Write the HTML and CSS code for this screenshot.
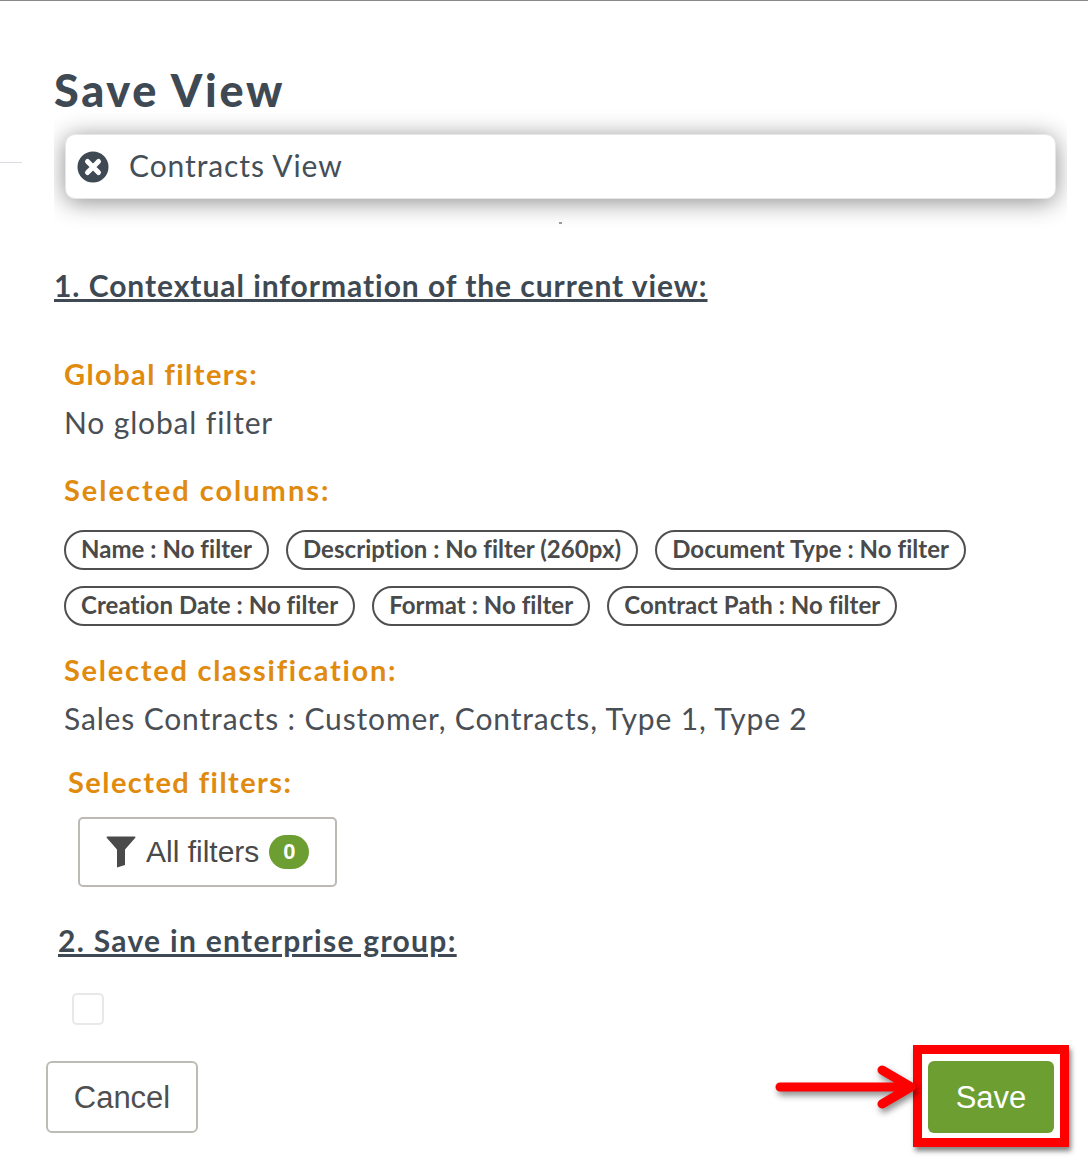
FILE: index.html
```html
<!DOCTYPE html>
<html lang="en">

<head>
    <meta charset="UTF-8">
    <meta name="viewport" content="width=device-width, initial-scale=1.0">
    <title>Save View</title>

    <link rel="stylesheet" href="styles.css">
</head>

<body>

    <div class="side-line"></div>

    <div class="dialog">
        <h1 class="dialog-title">Save View</h1>

        <div class="name-wrap">
            <div class="name-field">
                <svg class="clear-icon" width="32" height="32" viewBox="0 0 32 32">
                    <circle cx="16" cy="16" r="15.5" fill="#3e4953" />
                    <path d="M10.5 10.5 L21.5 21.5 M21.5 10.5 L10.5 21.5" stroke="#fff" stroke-width="5" stroke-linecap="round" />
                </svg>
                <span class="name-value">Contracts View</span>
            </div>
            <div class="speck"></div>
        </div>

        <h2 class="section-title section-one">1. Contextual information of the current view:</h2>

        <div class="context">
            <h3 class="label label-global">Global filters:</h3>
            <p class="value">No global filter</p>

            <h3 class="label label-columns">Selected columns:</h3>
            <div class="chips">
                <span class="chip">Name : No filter</span>
                <span class="chip">Description : No filter (260px)</span>
                <span class="chip">Document Type : No filter</span>
                <span class="chip">Creation Date : No filter</span>
                <span class="chip">Format : No filter</span>
                <span class="chip">Contract Path : No filter</span>
            </div>

            <h3 class="label label-class">Selected classification:</h3>
            <p class="value">Sales Contracts : Customer, Contracts, Type 1, Type 2</p>

            <h3 class="label label-filters">Selected filters:</h3>
            <button class="filters-btn">
                <svg width="30" height="32" viewBox="0 0 30 32">
                    <path d="M0.5 1.5 Q0.5 0.5 1.5 0.5 H28.5 Q29.5 0.5 29.5 1.5 L19 13.5 V29 L11 31.5 V13.5 Z" fill="#4a4a4a" />
                </svg>
                <span>All filters</span>
                <span class="count">0</span>
            </button>
        </div>

        <h2 class="section-title section-two">2. Save in enterprise group:</h2>
        <div class="group-check"></div>

        <div class="dialog-footer">
            <button class="btn btn-cancel">Cancel</button>
            <button class="btn btn-save">Save</button>
        </div>
    </div>

    <!-- annotation on top of the screenshot -->
    <div class="mark-box"></div>
    <svg class="mark-arrow" width="150" height="60" viewBox="0 0 150 60">
        <path d="M8 23 H136 M110 6 L139 23 L110 40" fill="none" stroke="#fe0000" stroke-width="9" stroke-linecap="round" stroke-linejoin="round" />
    </svg>

</body>

</html>
```

FILE: styles.css
```css
html,
body {
    margin: 0;
    height: 100%;
    background-color: #fff;
}

body {
    position: relative;
    height: 1166px;
    overflow: hidden;
    border-top: 1px solid #8a8a8a;
    box-sizing: border-box;
    font-family: Lato, "Open Sans", sans-serif;
    color: #3e4953;
}

.side-line {
    position: absolute;
    left: 0;
    top: 161px;
    width: 22px;
    height: 1px;
    background-color: #dcdce4;
}

.dialog {
    display: flex;
    flex-direction: column;
    align-items: flex-start;
    padding: 0 21px 0 54px;
}

.dialog-title {
    margin: 63px 0 0;
    height: 46px;
    font-size: 45px;
    line-height: 52px;
    font-weight: 900;
    letter-spacing: 2.7px;
    color: #3e4953;
}

.name-wrap {
    position: relative;
    align-self: stretch;
    height: 122px;
    padding: 24px 11px 0;
    box-sizing: border-box;
    overflow: hidden;
}

.name-field {
    display: flex;
    align-items: center;
    gap: 20px;
    height: 65px;
    padding-left: 11px;
    box-sizing: border-box;
    border: 1px solid #e6e6e6;
    border-radius: 10px;
    background-color: #fff;
    box-shadow: 0 3px 24px rgba(0, 0, 0, 0.45);
}

.name-value {
    margin-top: -4px;
    font-size: 30px;
    font-weight: 400;
    letter-spacing: 0.9px;
    color: #444f58;
}

.speck {
    position: absolute;
    left: 505px;
    top: 112px;
    width: 3px;
    height: 2px;
    background-color: #9a9a9a;
}

.section-title {
    margin: 0;
    font-size: 30px;
    line-height: 36px;
    font-weight: 700;
    letter-spacing: 0.95px;
    color: #3e4953;
    text-decoration: underline;
}

.section-one {
    margin-top: 35px;
}

.context {
    padding-left: 10px;
    margin-top: 53px;
}

.label {
    margin: 0;
    font-size: 29px;
    line-height: 36px;
    font-weight: 700;
    letter-spacing: 1.45px;
    color: #e08a0e;
}

.value {
    margin: 12px 0 0;
    font-size: 30px;
    line-height: 36px;
    letter-spacing: 0.85px;
    color: #4a4f55;
}

.label-columns {
    margin-top: 32px;
    letter-spacing: 2px;
}

.chips {
    display: flex;
    flex-wrap: wrap;
    gap: 16px 17px;
    margin-top: 22px;
    width: 920px;
}

.chip {
    height: 40px;
    padding: 0 15px;
    box-sizing: border-box;
    border: 2px solid #4f4f4f;
    border-radius: 20px;
    font-size: 24px;
    line-height: 34px;
    font-weight: 700;
    letter-spacing: 0.05px;
    color: #4a4a4a;
}

.label-class {
    margin-top: 26px;
    letter-spacing: 1.75px;
}

.label-filters {
    margin: 28px 0 0 4px;
}

.filters-btn {
    display: flex;
    align-items: center;
    gap: 10px;
    width: 259px;
    height: 70px;
    margin: 17px 0 0 14px;
    padding: 0 0 0 26px;
    box-sizing: border-box;
    border: 2px solid #bdb9b5;
    border-radius: 5px;
    background-color: #fff;
    font-family: "Liberation Sans", Arial, sans-serif;
    font-size: 30px;
    color: #4a4a4a;
}

.count {
    width: 40px;
    height: 34px;
    border-radius: 17px;
    background-color: #6c9e31;
    color: #fff;
    font-size: 22px;
    font-weight: 700;
    line-height: 34px;
    text-align: center;
}

.section-two {
    margin: 35px 0 0 4px;
    letter-spacing: 1.3px;
}

.group-check {
    width: 32px;
    height: 32px;
    margin: 35px 0 0 18px;
    box-sizing: border-box;
    border: 2px solid #e8e8e8;
    border-radius: 5px;
}

.dialog-footer {
    align-self: stretch;
    display: flex;
    justify-content: space-between;
    margin: 36px 0 0 -8px;
    padding-right: 13px;
}

.btn {
    height: 72px;
    padding-top: 2px;
    box-sizing: border-box;
    border-radius: 6px;
    font-family: "Liberation Sans", Arial, sans-serif;
    font-size: 31px;
}

.btn-cancel {
    width: 152px;
    border: 2px solid #bcbcb4;
    background-color: #fff;
    color: #4f4f4f;
}

.btn-save {
    width: 126px;
    border: none;
    background-color: #6c9e31;
    color: #fff;
}

.mark-box {
    position: absolute;
    left: 913px;
    top: 1044px;
    width: 156px;
    height: 102px;
    box-sizing: border-box;
    border: 9px solid #fe0000;
    box-shadow: 2px 4px 5px rgba(0, 0, 0, 0.5);
}

.mark-arrow {
    position: absolute;
    left: 772px;
    top: 1063px;
    filter: drop-shadow(2px 4px 3px rgba(0, 0, 0, 0.45));
}
```
